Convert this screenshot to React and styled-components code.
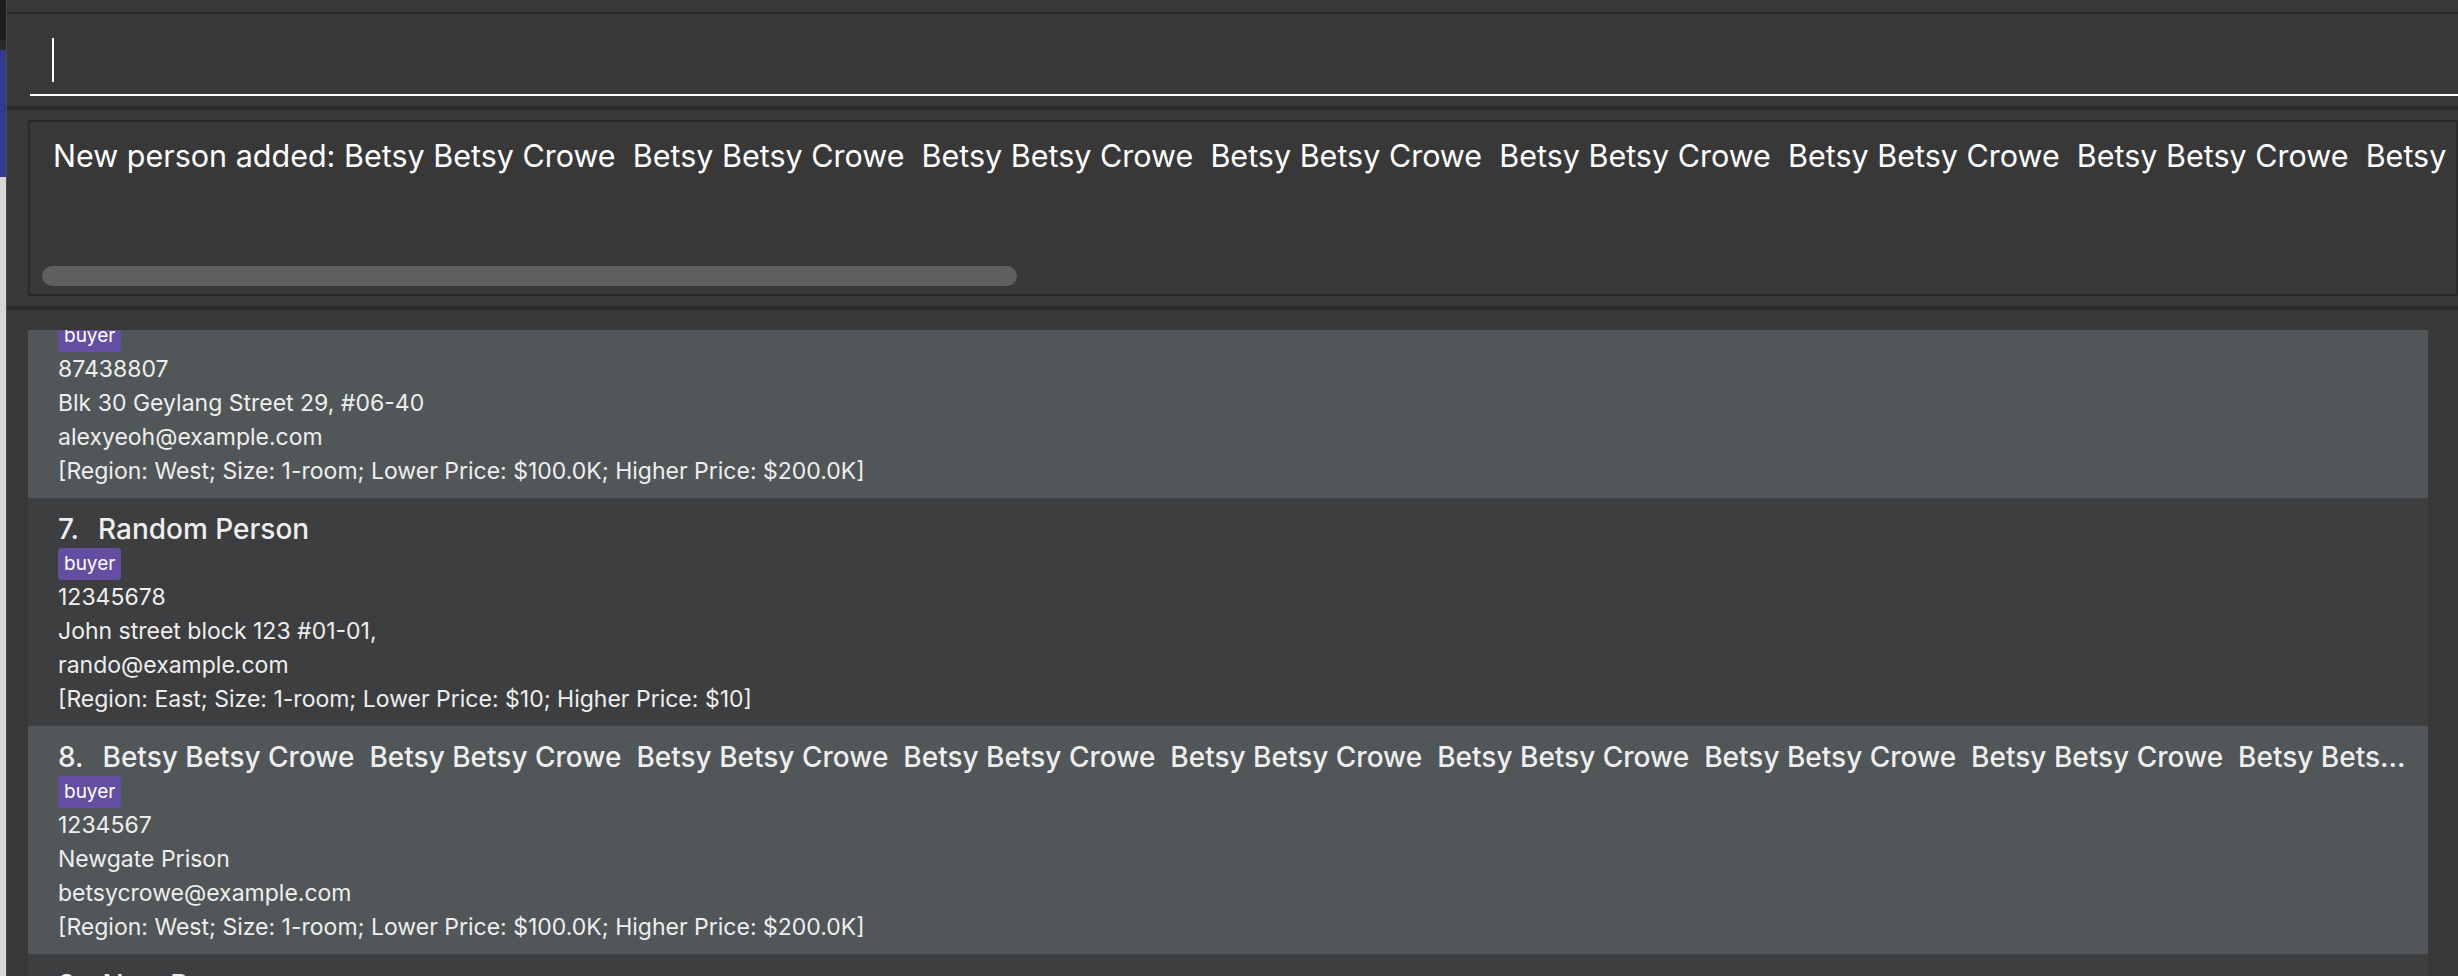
import React from 'react';
import styled, { createGlobalStyle } from 'styled-components';

const GlobalStyle = createGlobalStyle`
  html, body {
    margin: 0;
    padding: 0;
    background: #383838;
  }
  body {
    font-family: Inter, "Liberation Sans", sans-serif;
  }
`;

const Screen = styled.div`
  display: flex;
  width: 2458px;
  height: 976px;
  overflow: hidden;
`;

/* sliver of the window behind, on the far left */
const EdgeStrip = styled.div`
  flex: none;
  display: flex;
  flex-direction: column;
  width: 6px;
  background: #d6d6d6;
  border-right: 1px solid #4a4a4a;
`;

const EdgeBlock = styled.div`
  flex: none;
  height: ${p => p.$h}px;
  background: ${p => p.$c};
`;

const Window = styled.div`
  flex: 1;
  min-width: 0;
  display: flex;
  flex-direction: column;
  background: #383838;
`;

const MenuEdge = styled.div`
  flex: none;
  height: 12px;
  background: #383838;
`;

const Divider = styled.div`
  flex: none;
  height: ${p => p.$h}px;
  background: #2a2a2a;
`;

const CommandPane = styled.div`
  flex: none;
  height: 92px;
  box-sizing: border-box;
  padding: 14px 0 10px 23px;
`;

const CommandField = styled.div`
  box-sizing: border-box;
  height: 68px;
  padding: 10px 0 0 22px;
  border-bottom: 2px solid #ffffff;
`;

const Caret = styled.div`
  width: 2px;
  height: 44px;
  background: #ffffff;
`;

const ResultPane = styled.div`
  flex: none;
  height: 196px;
  box-sizing: border-box;
  padding: 10px 0 10px 21px;
`;

const ResultBox = styled.div`
  box-sizing: border-box;
  height: 100%;
  display: flex;
  flex-direction: column;
  border: 2px solid #2a2a2a;
  background: #383838;
  overflow: hidden;
`;

const ResultText = styled.div`
  padding: 15px 0 0 23px;
  font-size: 30.5px;
  line-height: 38px;
  color: #ffffff;
  white-space: pre;
`;

const ScrollTrack = styled.div`
  margin-top: auto;
  padding: 0 0 8px 12px;
`;

const ScrollThumb = styled.div`
  height: 20px;
  width: ${p => p.$w}px;
  border-radius: 10px;
  background: #5f5f5f;
`;

const ListPane = styled.div`
  flex: 1;
  min-height: 0;
  display: flex;
  flex-direction: column;
  padding: 20px 30px 0 21px;
`;

const ListViewport = styled.div`
  flex: 1;
  min-height: 0;
  overflow: hidden;
`;

/* list is scrolled down a little: first card is partly hidden */
const ListInner = styled.div`
  margin-top: -60px;
`;

const Card = styled.div`
  box-sizing: border-box;
  height: 228px;
  padding: 14px 20px 10px 30px;
  background: ${p => (p.$odd ? '#3c3e3f' : '#515658')};
  color: #eeeeee;
`;

const NameRow = styled.div`
  display: flex;
  font-size: 28px;
  line-height: 34px;
  font-weight: 500;
  white-space: pre;
`;

const IdLabel = styled.span`
  flex: none;
  margin-right: 19px;
`;

const NameLabel = styled.span`
  flex: 1;
  min-width: 0;
  overflow: hidden;
  text-overflow: ellipsis;
`;

const TagRow = styled.div`
  display: flex;
  gap: 6px;
  margin-top: 2px;
`;

const Tag = styled.span`
  height: 32px;
  padding: 0 6px;
  border-radius: 3px;
  background: #644ea2;
  color: #ffffff;
  font-size: 19px;
  line-height: 31px;
`;

const Detail = styled.div`
  font-size: 23px;
  line-height: 34px;
  white-space: nowrap;
`;

const betsy = Array(24).fill('Betsy Betsy Crowe').join('  ');

const people = [
  {
    id: 6,
    name: 'Alex Yeoh',
    phone: '87438807',
    address: 'Blk 30 Geylang Street 29, #06-40',
    email: 'alexyeoh@example.com',
    pref: '[Region: West; Size: 1-room; Lower Price: $100.0K; Higher Price: $200.0K]',
  },
  {
    id: 7,
    name: 'Random Person',
    phone: '12345678',
    address: 'John street block 123 #01-01,',
    email: 'rando@example.com',
    pref: '[Region: East; Size: 1-room; Lower Price: $10; Higher Price: $10]',
  },
  {
    id: 8,
    name: betsy,
    phone: '1234567',
    address: 'Newgate Prison',
    email: 'betsycrowe@example.com',
    pref: '[Region: West; Size: 1-room; Lower Price: $100.0K; Higher Price: $200.0K]',
  },
  {
    id: 9,
    name: 'New Person',
    phone: '98765432',
    address: 'Clementi Ave 2, #02-25',
    email: 'newperson@example.com',
    pref: '[Region: North; Size: 2-room; Lower Price: $50.0K; Higher Price: $90.0K]',
  },
];

function PersonCard({ person, odd }) {
  return (
    <Card $odd={odd}>
      <NameRow>
        <IdLabel>{person.id}.</IdLabel>
        <NameLabel>{person.name}</NameLabel>
      </NameRow>
      <TagRow>
        <Tag>buyer</Tag>
      </TagRow>
      <Detail>{person.phone}</Detail>
      <Detail>{person.address}</Detail>
      <Detail>{person.email}</Detail>
      <Detail>{person.pref}</Detail>
    </Card>
  );
}

export default function App() {
  return (
    <>
      <GlobalStyle />
      <Screen>
        <EdgeStrip>
          <EdgeBlock $h={40} $c="#1e1e1e" />
          <EdgeBlock $h={10} $c="#2b2b2b" />
          <EdgeBlock $h={127} $c="#343b8e" />
        </EdgeStrip>
        <Window>
          <MenuEdge />
          <Divider $h={2} />
          <CommandPane>
            <CommandField>
              <Caret />
            </CommandField>
          </CommandPane>
          <Divider $h={4} />
          <ResultPane>
            <ResultBox>
              <ResultText>{'New person added: ' + betsy}</ResultText>
              <ScrollTrack>
                <ScrollThumb $w={975} />
              </ScrollTrack>
            </ResultBox>
          </ResultPane>
          <Divider $h={4} />
          <ListPane>
            <ListViewport>
              <ListInner>
                {people.map((p, i) => (
                  <PersonCard key={p.id} person={p} odd={i % 2 === 1} />
                ))}
              </ListInner>
            </ListViewport>
          </ListPane>
        </Window>
      </Screen>
    </>
  );
}
